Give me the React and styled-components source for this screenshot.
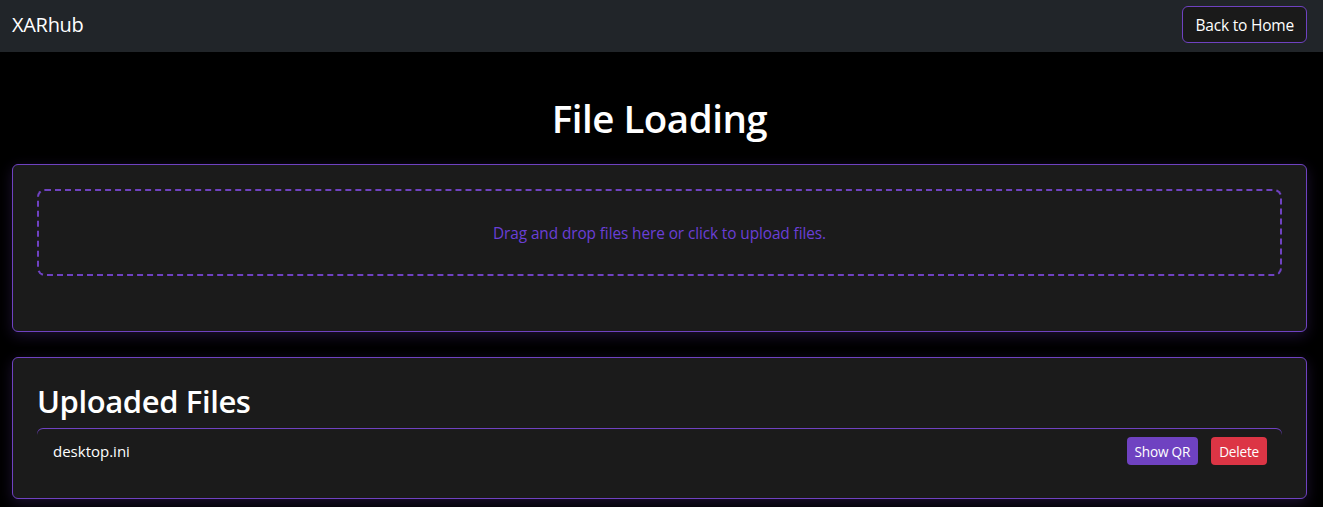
import React from 'react';
import styled, { createGlobalStyle } from 'styled-components';

const GlobalStyle = createGlobalStyle`
    body {
        margin: 0;
        background: #000;
        color: #fff;
        font-family: "Open Sans", "Noto Sans", sans-serif;
    }
`;

const Navbar = styled.nav`
    height: 52px;
    background: #212529;
    display: flex;
    align-items: center;
    justify-content: space-between;
    padding: 0 16px 3px 12px;
    box-sizing: border-box;
`;

const Brand = styled.div`
    font-size: 20px;
    letter-spacing: -0.3px;
    color: #fff;
`;

const OutlineButton = styled.button`
    height: 37px;
    padding: 0 12px;
    background: #1a1a1a;
    color: #fff;
    border: 1px solid #6f42c1;
    border-radius: 6px;
    font-family: inherit;
    font-size: 15.5px;
    letter-spacing: -0.2px;
    cursor: pointer;
`;

const Main = styled.main`
    padding: 0 16px 0 12px;
`;

const Title = styled.h1`
    margin: 0;
    padding: 42px 0 22px;
    text-align: center;
    font-size: 38.5px;
    font-weight: 600;
    line-height: 48px;
    letter-spacing: -0.5px;
`;

const Card = styled.section`
    background: #1b1b1b;
    border: 1px solid #6f42c1;
    border-radius: 6px;
    padding: 24px 24px ${(props) => props.bottom || 24}px;
    box-shadow: 0 4px 14px rgba(111, 66, 193, 0.25);
    margin-bottom: 25px;
`;

const DropZone = styled.div`
    height: 87px;
    box-sizing: border-box;
    border: 2px dashed #6f42c1;
    border-radius: 8px;
    display: flex;
    align-items: center;
    justify-content: center;
    color: #6a3fd6;
    font-size: 15.4px;
    letter-spacing: -0.1px;
    padding-top: 2px;
    cursor: pointer;
`;

const SectionTitle = styled.h2`
    margin: 0 0 8px;
    font-size: 31px;
    font-weight: 600;
    line-height: 38px;
    letter-spacing: -0.4px;
`;

const FileList = styled.ul`
    list-style: none;
    margin: 0;
    padding: 0;
`;

const FileItem = styled.li`
    display: flex;
    align-items: center;
    justify-content: space-between;
    padding: 9px 15px 9px 16px;
    border-radius: 6px 6px 0 0;
    box-shadow: inset 0 1px 0 #6f42c1;
    font-size: 15px;
`;

const Actions = styled.div`
    display: flex;
    gap: 13px;
`;

const SmallButton = styled.button`
    height: 28px;
    padding: 0 8px;
    border: none;
    border-radius: 4px;
    background: ${(props) => props.bg};
    color: #fff;
    font-family: inherit;
    font-size: 13.6px;
    letter-spacing: -0.2px;
    cursor: pointer;
`;

const files = ['desktop.ini'];

const App = () => (
    <>
        <GlobalStyle />
        <Navbar>
            <Brand>XARhub</Brand>
            <OutlineButton>Back to Home</OutlineButton>
        </Navbar>
        <Main>
            <Title>File Loading</Title>
            <Card bottom={55}>
                <DropZone>Drag and drop files here or click to upload files.</DropZone>
            </Card>
            <Card>
                <SectionTitle>Uploaded Files</SectionTitle>
                <FileList>
                    {files.map((name) => (
                        <FileItem key={name}>
                            {name}
                            <Actions>
                                <SmallButton bg="#6f42c1">Show QR</SmallButton>
                                <SmallButton bg="#dc3545">Delete</SmallButton>
                            </Actions>
                        </FileItem>
                    ))}
                </FileList>
            </Card>
        </Main>
    </>
);

export default App;
